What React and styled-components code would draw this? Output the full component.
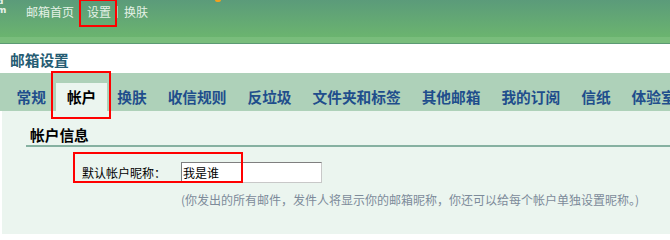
import React from "react";
import styled, { createGlobalStyle, css } from "styled-components";

const GlobalStyle = createGlobalStyle`
  body {
    margin: 0;
    background: #ffffff;
    font-family: "Noto Sans CJK SC", "Noto Sans", sans-serif;
  }
`;

const marked = css`
  position: relative;
  &::after {
    content: "";
    position: absolute;
    border: 2px solid #ff0000;
    pointer-events: none;
  }
`;

const Page = styled.div`
  width: 670px;
  height: 234px;
  overflow: hidden;
  display: flex;
  flex-direction: column;
`;

const TopBar = styled.div`
  position: relative;
  height: 37px;
  background: linear-gradient(#5b9b7a, #6bb46f);
  border-bottom: 6px solid #79bd7c;
  box-shadow: 0 1px 0 #5b9a74;
  margin-bottom: 1px;
`;

const Logo = styled.div`
  position: absolute;
  left: -3px;
  top: -3px;
  width: 9px;
  color: #e8f3ea;
  font: bold 9px/9px "DejaVu Sans", sans-serif;
`;

const Spark = styled.span`
  position: absolute;
  left: 215px;
  top: -2px;
  width: 6px;
  height: 4px;
  border-radius: 50%;
  background: #f0a020;
`;

const Nav = styled.nav`
  display: flex;
  align-items: center;
  gap: 6px;
  height: 24px;
  padding-left: 26px;
`;

const NavItem = styled.a`
  color: #e4f1e6;
  font-size: 12px;
  line-height: 16px;
  text-decoration: none;
  ${(p) =>
    p.$marked &&
    css`
      ${marked}
      &::after {
        left: -8px;
        right: -6px;
        top: -5px;
        bottom: -7px;
      }
    `}
`;

const NavSep = styled.span`
  width: 1px;
  height: 12px;
  background: #a9d0b0;
`;

const Title = styled.h1`
  margin: 0;
  height: 29px;
  padding: 6px 0 0 10px;
  box-sizing: border-box;
  font-size: 14.7px;
  line-height: 20px;
  font-weight: bold;
  color: #255c73;
`;

const TabBar = styled.div`
  display: flex;
  align-items: flex-end;
  height: 38px;
  padding-left: 6px;
  background: #aed1b9;
  white-space: nowrap;
`;

const Tab = styled.div`
  height: 28px;
  padding: 0 10.5px;
  font-size: 14.7px;
  font-weight: bold;
  line-height: 28px;
  color: ${(p) => (p.$active ? "#000000" : "#1f4e8c")};
  background: ${(p) => (p.$active ? "#ebf5ef" : "transparent")};
  ${(p) =>
    p.$active &&
    css`
      ${marked}
      &::after {
        left: -5px;
        right: -4px;
        top: -12px;
        bottom: -8px;
      }
    `}
`;

const Content = styled.div`
  flex: 1;
  margin-left: 2px;
  padding-top: 14px;
  background: #ebf5ef;
`;

const SectionHead = styled.h2`
  margin: 0 0 15px 24px;
  padding-left: 4px;
  height: 20px;
  font-size: 14.7px;
  line-height: 20px;
  font-weight: bold;
  color: #000000;
  border-bottom: 2px solid #86b1a1;
`;

const FieldRow = styled.div`
  display: flex;
  align-items: center;
  height: 21px;
  padding-left: 80px;
`;

const Label = styled.label`
  width: 99px;
  font-size: 12px;
  line-height: 21px;
  color: #000000;
  ${marked}
  &::after {
    left: -9px;
    top: -10px;
    width: 166px;
    bottom: 0;
  }
`;

const Input = styled.input`
  width: 141px;
  height: 21px;
  box-sizing: border-box;
  padding: 0 1px;
  border: 1px solid;
  border-color: #7f7f7f #c8c8c8 #c8c8c8 #7f7f7f;
  background: #ffffff;
  font-family: "Noto Sans CJK SC", sans-serif;
  font-size: 12px;
  color: #000000;
  outline: none;
`;

const Hint = styled.p`
  margin: 9px 0 0 179px;
  font-size: 12px;
  line-height: 16px;
  color: #7d8b9a;
  white-space: nowrap;
`;

const tabs = [
  "常规",
  "帐户",
  "换肤",
  "收信规则",
  "反垃圾",
  "文件夹和标签",
  "其他邮箱",
  "我的订阅",
  "信纸",
  "体验室",
];

export default function App() {
  return (
    <>
      <GlobalStyle />
      <Page>
        <TopBar>
          <Logo>
            d
            <br />m
          </Logo>
          <Spark />
          <Nav>
            <NavItem>邮箱首页</NavItem>
            <NavSep />
            <NavItem $marked>设置</NavItem>
            <NavSep />
            <NavItem>换肤</NavItem>
          </Nav>
        </TopBar>
        <Title>邮箱设置</Title>
        <TabBar>
          {tabs.map((t) => (
            <Tab key={t} $active={t === "帐户"}>
              {t}
            </Tab>
          ))}
        </TabBar>
        <Content>
          <SectionHead>帐户信息</SectionHead>
          <FieldRow>
            <Label>默认帐户昵称：</Label>
            <Input defaultValue="我是谁" />
          </FieldRow>
          <Hint>
            (你发出的所有邮件，发件人将显示你的邮箱昵称，你还可以给每个帐户单独设置昵称。)
          </Hint>
        </Content>
      </Page>
    </>
  );
}
